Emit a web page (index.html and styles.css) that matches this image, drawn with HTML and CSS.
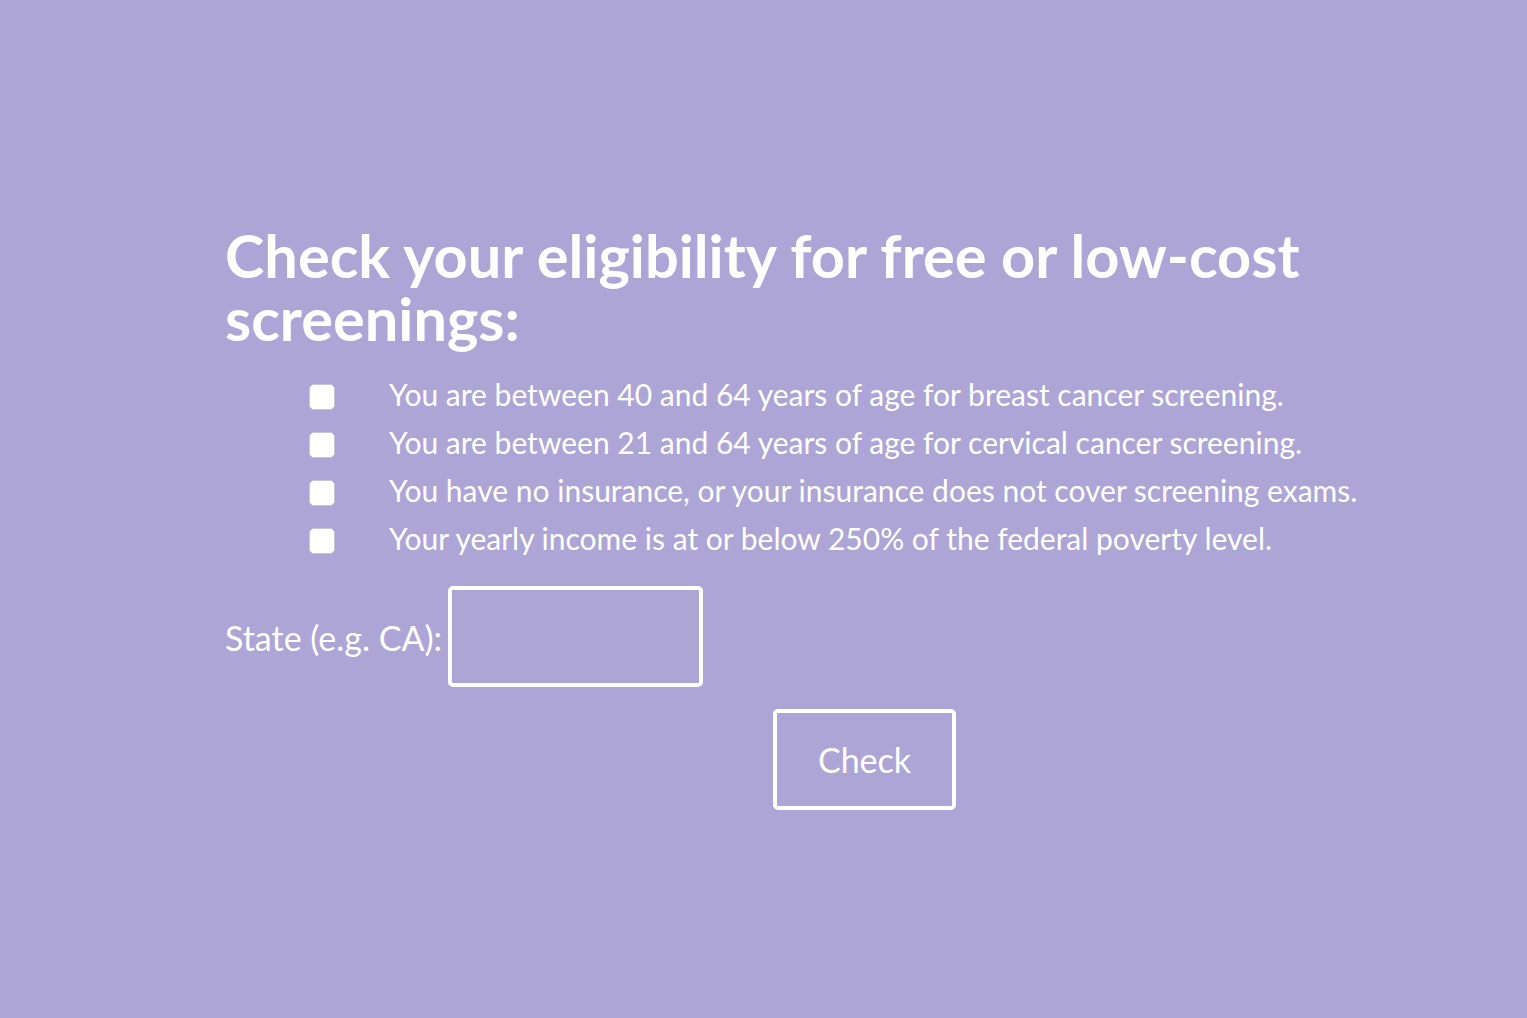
FILE: index.html
```html
<!DOCTYPE html>
<html lang="en">
<head>
<meta charset="utf-8">
<title>Eligibility</title>
<link rel="stylesheet" href="styles.css">
</head>
<body>
<main class="page">
  <form class="content">
    <h1 class="title">Check your eligibility for free or low-cost screenings:</h1>
    <ul class="criteria">
      <li class="criterion"><span class="box"></span><span class="label">You are between 40 and 64 years of age for breast cancer screening.</span></li>
      <li class="criterion"><span class="box"></span><span class="label">You are between 21 and 64 years of age for cervical cancer screening.</span></li>
      <li class="criterion"><span class="box"></span><span class="label">You have no insurance, or your insurance does not cover screening exams.</span></li>
      <li class="criterion"><span class="box"></span><span class="label">Your yearly income is at or below 250% of the federal poverty level.</span></li>
    </ul>
    <div class="state-row">
      <span class="state-label">State (e.g. CA):</span>
      <span class="state-input"></span>
    </div>
    <div class="actions">
      <span class="check-btn">Check</span>
    </div>
  </form>
</main>
</body>
</html>
```
FILE: styles.css
```css
html, body {
  margin: 0;
  padding: 0;
}
body {
  background: #ada5d6;
  color: #ffffff;
  font-family: Lato, "Open Sans", sans-serif;
  min-height: 1018px;
}
.page {
  padding: 224px 0 0 225px;
}
.content {
  width: 1200px;
}
.title {
  margin: 0;
  font-size: 59.5px;
  line-height: 63px;
  font-weight: 700;
  width: 1090px;
}
.criteria {
  list-style: none;
  margin: 21px 0 0 84px;
  padding: 0;
}
.criterion {
  display: flex;
  align-items: center;
  height: 48px;
  font-size: 30px;
}
.label {
  white-space: nowrap;
  margin-top: -3px;
}
.box {
  width: 26px;
  height: 26px;
  background: #fff;
  border: 1px solid #c9c6d2;
  box-sizing: border-box;
  border-radius: 5px;
  margin-right: 54px;
  margin-top: 4px;
  flex: none;
}
.state-row {
  display: flex;
  align-items: center;
  margin-top: 23px;
}
.state-label {
  font-size: 34px;
  margin-right: 6px;
  padding-top: 2px;
}
.state-input {
  width: 255px;
  height: 101px;
  box-sizing: border-box;
  border: 4px solid #fff;
  border-radius: 5px;
}
.actions {
  margin-top: 22px;
  margin-left: 548px;
}
.check-btn {
  display: flex;
  align-items: center;
  justify-content: center;
  width: 183px;
  height: 101px;
  box-sizing: border-box;
  border: 4px solid #fff;
  border-radius: 5px;
  font-size: 34px;
}
```
